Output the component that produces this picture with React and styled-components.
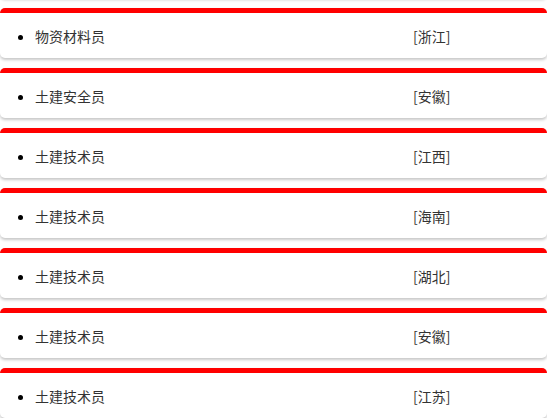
import React from "react";
import styled, { createGlobalStyle } from "styled-components";

const GlobalStyle = createGlobalStyle`
  body {
    margin: 0;
    background: #fff;
    font-family: "Noto Sans CJK SC", "Microsoft YaHei", sans-serif;
    overflow: hidden;
  }
`;

const List = styled.div`
  margin-top: -52px;
  display: flex;
  flex-direction: column;
  gap: 10px;
`;

const Card = styled.div`
  height: 45px;
  border-top: 5px solid #ff0000;
  border-radius: 5px;
  background: #fff;
  box-shadow: 0 2px 3px rgba(0, 0, 0, 0.22);
  display: flex;
  align-items: center;
`;

const Row = styled.ul`
  margin: 0;
  padding: 0 0 0 35px;
  width: 100%;
  display: flex;
  align-items: center;
  font-size: 14px;
  color: #333;
`;

const Name = styled.li`
  width: 378px;
  list-style: disc;
  &::marker {
    color: #000;
    font-size: 14px;
  }
`;

const Region = styled.span``;

const jobs = [
  { name: "物资材料员", region: "浙江" },
  { name: "土建安全员", region: "安徽" },
  { name: "土建技术员", region: "江西" },
  { name: "土建技术员", region: "海南" },
  { name: "土建技术员", region: "湖北" },
  { name: "土建技术员", region: "安徽" },
  { name: "土建技术员", region: "江苏" },
];

const App = () => {
  return (
    <>
      <GlobalStyle />
      <List>
        {/* previous item, scrolled off above */}
        <Card />
        {jobs.map((job, index) => (
          <Card key={index}>
            <Row>
              <Name>{job.name}</Name>
              <Region>[{job.region}]</Region>
            </Row>
          </Card>
        ))}
      </List>
    </>
  );
};

export default App;
